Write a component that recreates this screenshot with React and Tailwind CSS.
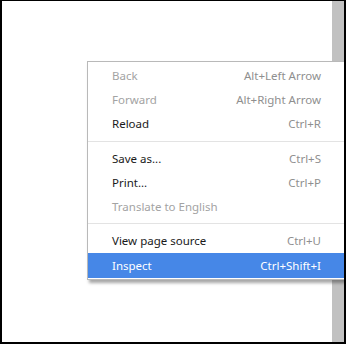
const groups = [
  [
    { label: "Back", shortcut: "Alt+Left Arrow", disabled: true },
    { label: "Forward", shortcut: "Alt+Right Arrow", disabled: true },
    { label: "Reload", shortcut: "Ctrl+R" },
  ],
  [
    { label: "Save as...", shortcut: "Ctrl+S" },
    { label: "Print...", shortcut: "Ctrl+P" },
    { label: "Translate to English", shortcut: "", disabled: true },
  ],
  [
    { label: "View page source", shortcut: "Ctrl+U" },
    { label: "Inspect", shortcut: "Ctrl+Shift+I", active: true },
  ],
];

function MenuItem({ item }) {
  if (item.active) {
    return (
      <div className="flex h-[25px] items-center justify-between bg-[#4687e7] pl-[24px] pr-[24px] text-white">
        <span>{item.label}</span>
        <span>{item.shortcut}</span>
      </div>
    );
  }
  return (
    <div className="flex h-6 items-center justify-between pl-[24px] pr-[24px]">
      <span className={item.disabled ? "text-[#a3a3a3]" : "text-[#1a1a1a]"}>
        {item.label}
      </span>
      <span className="text-[#8f8f8f]">{item.shortcut}</span>
    </div>
  );
}

export default function App() {
  return (
    <div
      className="relative flex h-[344px] w-[346px] overflow-hidden border-2 border-t border-black bg-white"
      style={{ fontFamily: '"Noto Sans", "Open Sans", sans-serif' }}
    >
      <div className="flex-1" />
      <div className="w-[12px] bg-[#c1c1c1]" />

      {/* Context menu */}
      <div className="absolute left-[85px] top-[60px] w-[259px] border border-[#b9b9b9] bg-white pt-[2px] pb-[1px] text-[11.5px] shadow-[2px_3px_3px_rgba(0,0,0,0.35)]">
        {groups.map((group, gi) => (
          <div key={gi}>
            {gi > 0 && (
              <div
                className={`h-px bg-[#e3e3e3] ${gi === 1 ? "mt-[5px] mb-[5px]" : "mt-[4px] mb-[5px]"}`}
              />
            )}
            {group.map((item) => (
              <MenuItem key={item.label} item={item} />
            ))}
          </div>
        ))}
      </div>
    </div>
  );
}
